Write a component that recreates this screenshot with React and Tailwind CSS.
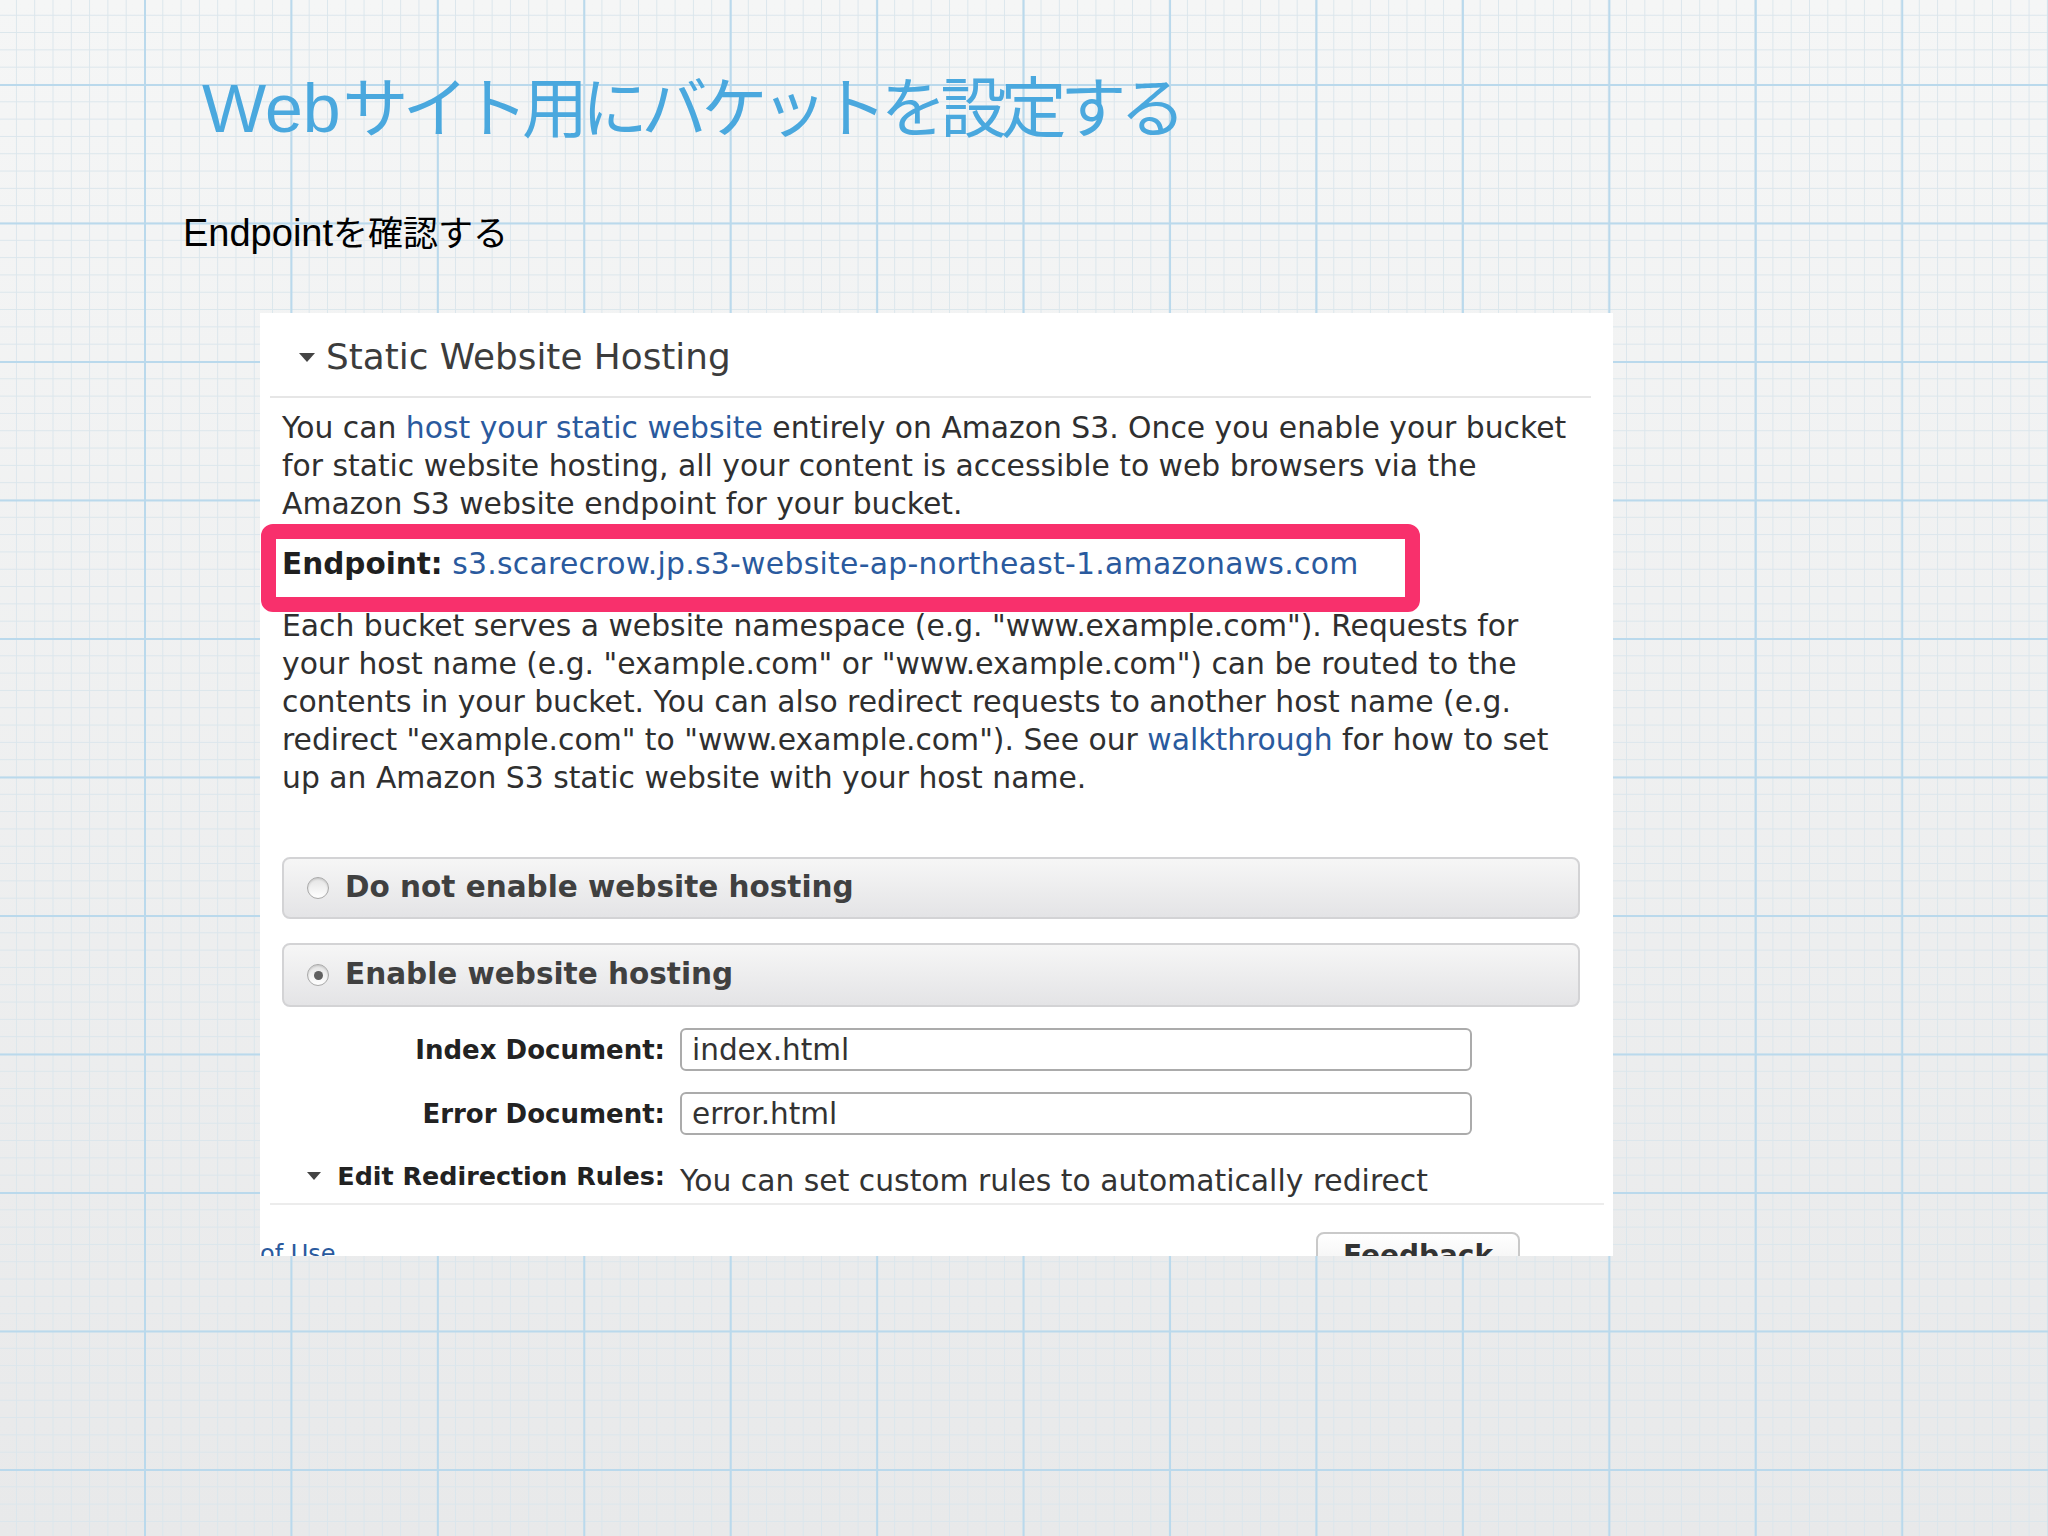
import React from "react";

const bodyFont = { fontFamily: '"DejaVu Sans", Verdana, sans-serif' };

function Triangle({ size = "big" }) {
  return size === "big" ? (
    <span className="inline-block w-0 h-0 border-l-[8px] border-r-[8px] border-t-[9px] border-l-transparent border-r-transparent border-t-[#444]" />
  ) : (
    <span className="inline-block w-0 h-0 border-l-[7px] border-r-[7px] border-t-[8px] border-l-transparent border-r-transparent border-t-[#444]" />
  );
}

function Radio({ checked }) {
  return (
    <span className="relative flex items-center justify-center w-[22px] h-[22px] rounded-full border border-[#a9a9a9] bg-gradient-to-b from-[#e4e4e4] to-[#ffffff] shadow-[inset_0_1px_2px_rgba(0,0,0,0.15)]">
      {checked && <span className="w-[9px] h-[9px] rounded-full bg-[#5f5f5f]" />}
    </span>
  );
}

function RadioBox({ checked, label, h }) {
  return (
    <div
      className={`flex items-center ${h} rounded-[8px] border-2 border-[#d3d3d5] bg-gradient-to-b from-[#f6f6f6] to-[#e4e4e6] pl-[23px]`}
    >
      <Radio checked={checked} />
      <span className="ml-[16px] text-[29.5px] font-bold text-[#404040] leading-none">{label}</span>
    </div>
  );
}

function Link({ children }) {
  return <span className="text-[#2a5a9e]">{children}</span>;
}

export default function App() {
  return (
    <div
      className="relative w-[2048px] h-[1536px] overflow-hidden [background-image:linear-gradient(to_right,#bad9ec_2px,transparent_2px),linear-gradient(to_bottom,#bad9ec_2px,transparent_2px),linear-gradient(to_right,#dbe6ec_1px,transparent_1px),linear-gradient(to_bottom,#dbe6ec_1px,transparent_1px),linear-gradient(to_bottom,#f5f6f6,#e8e9ea)] [background-size:146.45px_138.5px,146.45px_138.5px,18.306px_17.3125px,18.306px_17.3125px,100%_100%] [background-position:144px_84px,144px_84px,144px_84px,144px_84px,0_0]"
    >
      {/* Title */}
      <div className="pt-[73px] pl-[202px]">
        <h1
          className="h-[70px] leading-[70px] text-[66px] tracking-[-6.2px] font-normal text-[#4aa8de] whitespace-nowrap"
          style={{ fontFamily: '"Liberation Sans", "Noto Sans CJK JP", sans-serif' }}
        >
          <span className="text-[68px] tracking-[0px] mr-[2px]">Web</span>サイト用にバケットを設定する
        </h1>
      </div>

      {/* Subtitle */}
      <div className="mt-[70px] pl-[183px]">
        <p
          className="h-[40px] leading-[40px] text-[35px] text-black whitespace-nowrap"
          style={{ fontFamily: '"Liberation Sans", "Noto Sans CJK JP", sans-serif' }}
        >
          <span className="text-[38px]">Endpoint</span>を確認する
        </p>
      </div>

      {/* Screenshot panel */}
      <div
        className="relative mt-[60px] ml-[260px] w-[1353px] h-[943px] bg-white overflow-hidden flex flex-col text-[#2f2f2f]"
        style={bodyFont}
      >
        {/* Header */}
        <div className="ml-[10px] mr-[22px] border-b-2 border-[#e6e6e6] pt-[22px] pb-[17px] pl-[29px] flex items-center">
          <Triangle />
          <span className="ml-[11px] text-[35.8px] leading-[44px] text-[#3c3c3c] whitespace-nowrap">
            Static Website Hosting
          </span>
        </div>

        {/* Content */}
        <div className="pl-[22px] pr-[33px] flex flex-col text-[29.8px] leading-[38px] whitespace-nowrap">
          <p className="mt-[11px]">
            You can <Link>host your static website</Link> entirely on Amazon S3. Once you enable your bucket
            <br />
            for static website hosting, all your content is accessible to web browsers via the
            <br />
            Amazon S3 website endpoint for your bucket.
          </p>
          <p className="mt-[22px]">
            <span className="font-bold text-[#1f1f1f] text-[29.5px]">Endpoint:</span>{" "}
            <span className="tracking-[0.3px]">
              <Link>s3.scarecrow.jp.s3-website-ap-northeast-1.amazonaws.com</Link>
            </span>
          </p>
          <p className="mt-[24px]">
            Each bucket serves a website namespace (e.g. "www.example.com"). Requests for
            <br />
            your host name (e.g. "example.com" or "www.example.com") can be routed to the
            <br />
            contents in your bucket. You can also redirect requests to another host name (e.g.
            <br />
            redirect "example.com" to "www.example.com"). See our <Link>walkthrough</Link> for how to set
            <br />
            up an Amazon S3 static website with your host name.
          </p>

          <div className="mt-[60px]">
            <RadioBox label="Do not enable website hosting" h="h-[62px]" />
          </div>
          <div className="mt-[24px]">
            <RadioBox checked label="Enable website hosting" h="h-[64px]" />
          </div>

          <div className="mt-[21px] grid grid-cols-[383px_792px] gap-x-[15px] items-center">
            <span className="text-right text-[26px] font-bold text-[#222]">Index Document:</span>
            <div className="h-[43px] rounded-[6px] border-2 border-[#ababab] bg-white px-[10px] flex items-center text-[29.5px] text-[#333]">
              index.html
            </div>
          </div>
          <div className="mt-[21px] grid grid-cols-[383px_792px] gap-x-[15px] items-center">
            <span className="text-right text-[26px] font-bold text-[#222]">Error Document:</span>
            <div className="h-[43px] rounded-[6px] border-2 border-[#ababab] bg-white px-[10px] flex items-center text-[29.5px] text-[#333]">
              error.html
            </div>
          </div>
          <div className="mt-[22px] grid grid-cols-[383px_1fr] gap-x-[15px] items-start h-[38px]">
            <span className="flex justify-end items-center gap-[16px] h-[38px] text-[25.4px] font-bold text-[#222]">
              <Triangle size="small" />
              Edit Redirection Rules:
            </span>
            <span className="mt-[5px] text-[29.8px] leading-[38px] text-[#333]">
              You can set custom rules to automatically redirect
            </span>
          </div>
        </div>

        {/* Bottom separator */}
        <div className="mt-[8px] ml-[10px] mr-[9px] border-t-2 border-[#ececec]" />

        {/* Footer */}
        <div className="flex items-start">
          <span className="mt-[35px] text-[24px] leading-[28px] text-[#2a5a9e] whitespace-nowrap">of Use</span>
          <div className="ml-auto mr-[93px] mt-[27px] w-[204px] h-[48px] rounded-t-[8px] border-2 border-[#c9c9c9] bg-gradient-to-b from-white to-[#eeeeee] flex justify-center pt-[6px]">
            <span className="text-[28px] leading-[32px] font-bold text-[#333]">Feedback</span>
          </div>
        </div>

        {/* Annotation rectangle */}
        <div className="absolute left-[1px] top-[211px] w-[1159px] h-[88px] rounded-[12px] border-[15px] border-[#f8306c] pointer-events-none" />
      </div>
    </div>
  );
}
